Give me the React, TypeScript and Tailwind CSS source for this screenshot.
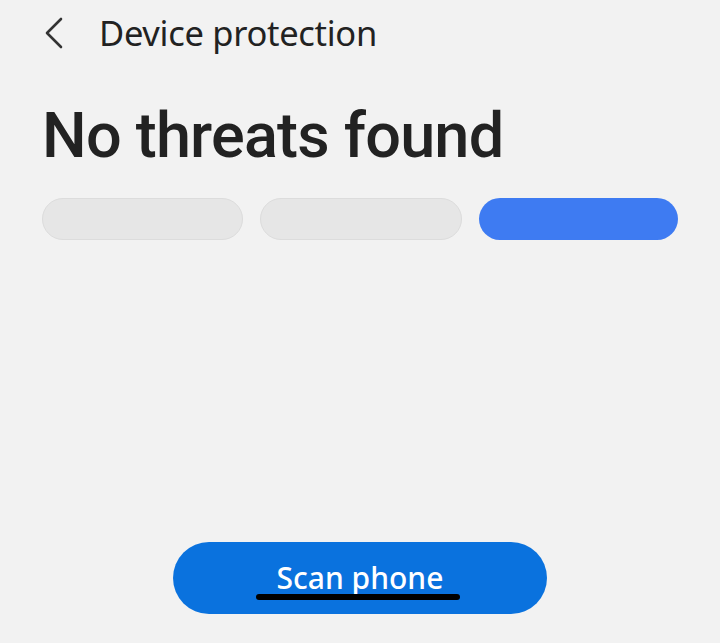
import React from "react";

const font = { fontFamily: '"Noto Sans", Roboto, sans-serif' };

export default function App() {
  const bars = [false, false, true];

  return (
    <div
      className="relative flex h-[643px] w-[720px] flex-col bg-[#f2f2f2] text-[#222]"
      style={font}
    >
      <header className="flex h-[66px] items-center pl-[44px]">
        <svg width="20" height="32" viewBox="0 0 20 32" className="mr-[35px]">
          <path
            d="M17 2 L3 16 L17 30"
            fill="none"
            stroke="#333"
            strokeWidth="2.6"
            strokeLinecap="round"
            strokeLinejoin="round"
          />
        </svg>
        <h1 className="text-[34.5px] leading-none tracking-[-0.3px]">Device protection</h1>
      </header>

      <h2 className="mt-[30px] pl-[42px] font-['Roboto',sans-serif] text-[63px] font-medium leading-[80px] tracking-[-0.8px]">
        No threats found
      </h2>

      <div className="mt-[22px] flex gap-[17px] px-[42px]">
        {bars.map((on, i) => (
          <div
            key={i}
            className={
              on
                ? "h-[42px] flex-1 rounded-full bg-[#3e7bf2]"
                : "h-[42px] flex-1 rounded-full border border-[#dcdcdc] bg-[#e6e6e6]"
            }
          />
        ))}
      </div>

      <div className="mt-auto mb-[29px] flex justify-center">
        <button className="flex h-[72px] w-[374px] items-center justify-center rounded-full bg-[#0a72de] pb-[2px] text-[30px] font-medium text-white">
          Scan phone
        </button>
      </div>

      <div className="absolute left-[256px] top-[594px] h-[6px] w-[204px] rounded-full bg-black" />
    </div>
  );
}
